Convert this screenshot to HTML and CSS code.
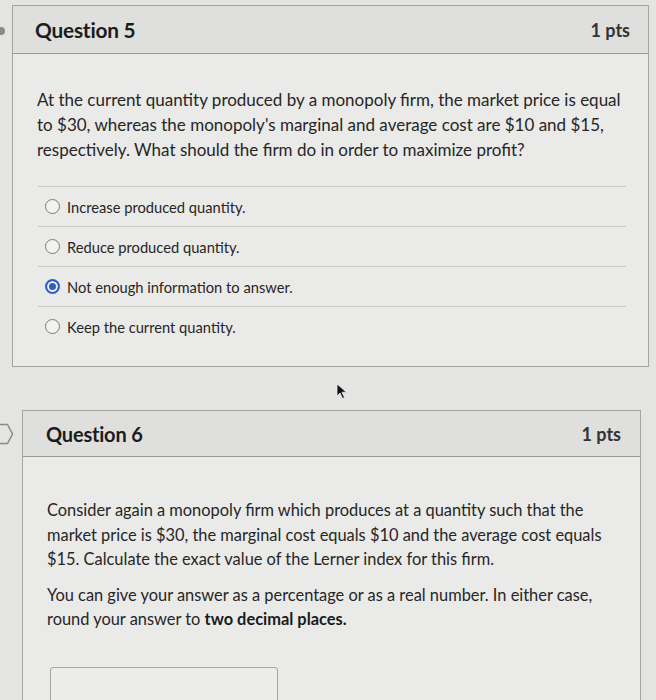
FILE: index.html
```html
<!DOCTYPE html>
<html>
<head>
<meta charset="utf-8">
<link rel="stylesheet" href="styles.css">
</head>
<body>
<div class="page">
  <div class="question q5">
    <span class="flag-dot"></span>
    <div class="q-header">
      <h2 class="q-title">Question 5</h2>
      <span class="q-pts">1 pts</span>
    </div>
    <div class="q-body">
      <p class="q-text">At the current quantity produced by a monopoly firm, the market price is equal to $30, whereas the monopoly's marginal and average cost are $10 and $15, respectively. What should the firm do in order to maximize profit?</p>
      <div class="answers">
        <label class="answer"><span class="radio"></span><span>Increase produced quantity.</span></label>
        <label class="answer"><span class="radio"></span><span>Reduce produced quantity.</span></label>
        <label class="answer"><span class="radio checked"></span><span>Not enough information to answer.</span></label>
        <label class="answer"><span class="radio"></span><span>Keep the current quantity.</span></label>
      </div>
    </div>
  </div>

  <div class="question q6">
    <svg class="flag" width="14" height="22" viewBox="0 0 14 22"><path d="M-6 1.5 H7.5 L12.5 11 L7.5 20.5 H-6" fill="none" stroke="#8a8a8a" stroke-width="1.5"/></svg>
    <div class="q-header">
      <h2 class="q-title">Question 6</h2>
      <span class="q-pts">1 pts</span>
    </div>
    <div class="q-body">
      <p class="q-text">Consider again a monopoly firm which produces at a quantity such that the market price is $30, the marginal cost equals $10 and the average cost equals $15. Calculate the exact value of the Lerner index for this firm.</p>
      <p class="q-text second">You can give your answer as a percentage or as a real number. In either case, round your answer to <strong>two decimal places.</strong></p>
      <div class="answer-input"></div>
    </div>
  </div>

  <svg class="cursor" width="12" height="17" viewBox="0 0 12 17"><path d="M1 1 L1 13 L4 10 L6.5 15.5 L8.5 14.5 L6 9.2 L10.5 9.2 Z" fill="#111" stroke="#eee" stroke-width="0.8"/></svg>
</div>
</body>
</html>
```

FILE: styles.css
```css
html, body {
  margin: 0;
  padding: 0;
  background: #e4e4e2;
}
body {
  font-family: Lato, "Open Sans", "Liberation Sans", sans-serif;
  color: #222;
  width: 656px;
  height: 700px;
  overflow: hidden;
}
.page {
  position: relative;
  padding-top: 5px;
}
.question {
  position: relative;
  border: 1px solid #a4a4a2;
  background: #eaeae8;
}
.q5 {
  margin-left: 12px;
  width: 635px;
}
.q6 {
  margin-top: 43px;
  margin-left: 22px;
  width: 617px;
  height: 300px;
}
.q-header {
  display: flex;
  justify-content: space-between;
  align-items: center;
  background: #dfdfdd;
  border-bottom: 1px solid #9a9a98;
  height: 47px;
  padding: 0 18px 0 22px;
}
.q6 .q-header {
  height: 45px;
  padding: 0 19px 0 23px;
}
.q-title {
  margin: 0;
  font-size: 20px;
  font-weight: 700;
  color: #1c1c1c;
  letter-spacing: -0.2px;
}
.q5 .q-title {
  font-size: 20.8px;
}
.q-pts {
  font-size: 18px;
  font-weight: 700;
  color: #333;
}
.q-body {
  padding: 33px 22px 20px 24px;
}
.q6 .q-body {
  padding-top: 41px;
}
.q-text {
  margin: 0;
  font-size: 16.4px;
  line-height: 24.5px;
  color: #262626;
}
.q5 .q-text {
  font-size: 17px;
  line-height: 25px;
}
.q-text.second {
  margin-top: 11px;
}
.q-text strong {
  font-weight: 700;
  color: #1a1a1a;
}
.answers {
  margin-top: 24px;
  margin-left: 1px;
}
.answer {
  display: flex;
  align-items: center;
  gap: 7px;
  height: 39px;
  border-top: 1px solid #c9c9c7;
  font-size: 14.7px;
  color: #262626;
  padding-left: 7px;
}
.radio {
  width: 13px;
  height: 13px;
  border: 1px solid #7a7a7a;
  border-radius: 50%;
  background: #f2f2f0;
  flex: none;
}
.radio.checked {
  border: 2px solid #2d5fc4;
  width: 11px;
  height: 11px;
  background: #2d5fc4;
  box-shadow: inset 0 0 0 2px #f0f0ee;
}
.answer-input {
  margin-top: 35px;
  margin-left: 3px;
  width: 226px;
  height: 40px;
  border: 1px solid #a8a8a6;
  border-radius: 3px;
  background: #ececea;
}
.flag-dot {
  position: absolute;
  left: -16px;
  top: 21px;
  width: 8px;
  height: 8px;
  border-radius: 50%;
  background: #8a8a8a;
}
.flag {
  position: absolute;
  left: -23px;
  top: 12px;
}
.cursor {
  position: absolute;
  left: 336px;
  top: 383px;
}
```
